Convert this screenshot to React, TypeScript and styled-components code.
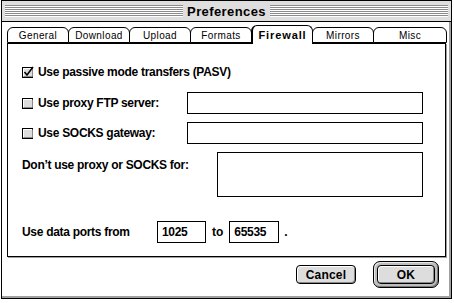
import React from 'react'
import styled, { createGlobalStyle } from 'styled-components'

const GlobalStyle = createGlobalStyle`
    html, body {
        margin: 0;
        padding: 0;
        background: #fff;
    }
    body {
        font-family: "Liberation Sans", Arial, sans-serif;
        color: #000;
    }
`

const Screen = styled.div`
    width: 454px;
    height: 303px;
    padding-left: 1px;
    box-sizing: border-box;
    background: #fff;
    overflow: hidden;
`

const Window = styled.div`
    width: 451px;
    height: 299px;
    box-sizing: border-box;
    border: 1px solid #000;
    background: #fff;
    display: flex;
    flex-direction: column;
    box-shadow: inset -2px -2px 0 #a0a0a0;
`

const TitleBar = styled.div`
    height: 20px;
    flex: none;
    display: flex;
    align-items: center;
    gap: 4px;
    padding: 0 3px;
    background: #dedede;
    border-bottom: 1px solid #000;
`

const Stripes = styled.div`
    flex: 1;
    height: 12px;
    background: repeating-linear-gradient(to bottom, #8c8c8c 0 1px, #fff 1px 2px);
`

const Title = styled.span`
    font-weight: bold;
    font-size: 13px;
    letter-spacing: 0.4px;
`

const Body = styled.div`
    flex: 1;
    display: flex;
    flex-direction: column;
    padding: 3px 0 0 5px;
`

const TabRow = styled.div`
    display: flex;
    align-items: flex-end;
    height: 18px;
    width: 440px;
    position: relative;
    z-index: 1;
`

const Tab = styled.div<{ $active?: boolean; $wide?: boolean }>`
    box-sizing: border-box;
    width: ${p => (p.$wide ? 'auto' : '62px')};
    flex: ${p => (p.$wide ? '1' : 'none')};
    height: ${p => (p.$active ? '19px' : '16px')};
    margin-bottom: ${p => (p.$active ? '-1px' : '0')};
    margin-left: -1px;
    border: 1px solid #000;
    border-bottom: ${p => (p.$active ? 'none' : '1px solid #000')};
    border-left-width: ${p => (p.$active ? '2px' : '1px')};
    border-radius: 6px 6px 0 0;
    background: #fff;
    display: flex;
    align-items: center;
    justify-content: center;
    font-size: ${p => (p.$active ? '11px' : '10px')};
    font-weight: ${p => (p.$active ? 'bold' : 'normal')};
    letter-spacing: ${p => (p.$active ? '0.9px' : '0.4px')};
    padding-bottom: ${p => (p.$active ? '1px' : '0')};
    &:first-child {
        margin-left: 0;
    }
`

const Panel = styled.div`
    box-sizing: border-box;
    width: 439px;
    height: 214px;
    border: 1px solid #000;
    box-shadow: 1px 1px 0 #a0a0a0;
    padding: 17px 22px 0 14px;
    display: flex;
    flex-direction: column;
`

const Row = styled.div<{ $top?: number; $start?: boolean }>`
    display: flex;
    align-items: ${p => (p.$start ? 'flex-start' : 'center')};
    justify-content: space-between;
    min-height: 22px;
    margin-top: ${p => p.$top ?? 0}px;
`

const Label = styled.label<{ $width?: number; $pad?: number }>`
    display: flex;
    align-items: center;
    gap: 4px;
    font-size: 12px;
    font-weight: bold;
    letter-spacing: -0.3px;
    white-space: nowrap;
    width: ${p => (p.$width ? `${p.$width}px` : 'auto')};
    padding-top: ${p => p.$pad ?? 0}px;
`

const Field = styled.div<{ $width: number; $height?: number }>`
    box-sizing: border-box;
    width: ${p => p.$width}px;
    height: ${p => p.$height ?? 22}px;
    border: 1px solid #000;
    background: #fff;
    padding: 0 4px;
    display: flex;
    align-items: center;
    font-size: 12px;
    font-weight: bold;
    letter-spacing: -0.3px;
`

const PortRow = styled.div`
    display: flex;
    align-items: center;
    height: 22px;
    margin-top: 24px;
`

const Joiner = styled.span<{ $left: number; $right: number }>`
    font-size: 12px;
    font-weight: bold;
    margin: 0 ${p => p.$right}px 0 ${p => p.$left}px;
`

const ButtonRow = styled.div`
    flex: 1;
    display: flex;
    justify-content: flex-end;
    align-items: flex-start;
    gap: 17px;
    padding: 4px 12px 0 0;
`

const Button = styled.div<{ $width: number }>`
    box-sizing: border-box;
    width: ${p => p.$width}px;
    height: 19px;
    margin-top: 4px;
    border: 1px solid #000;
    border-radius: 4px;
    background: #dddddd;
    box-shadow: inset 1px 1px 0 #fff, inset -1px -1px 0 #888;
    display: flex;
    align-items: center;
    justify-content: center;
    font-size: 12px;
    font-weight: bold;
    letter-spacing: 0.2px;
`

const DefaultRing = styled.div`
    box-sizing: border-box;
    height: 27px;
    padding: 3px;
    border: 1px solid #000;
    border-radius: 7px;
    background: #bdbdbd;
    box-shadow: inset 1px 1px 0 #e8e8e8, inset -1px -1px 0 #7a7a7a;
    & > div {
        margin-top: 0;
    }
`

const Check = ({ checked }: { checked?: boolean }) => (
    <svg width="12" height="12" viewBox="0 0 12 12">
        <rect x="0.5" y="1.5" width="10" height="10" fill="#dcdcdc" stroke="#000" />
        <path d="M1.5 10.5 H10.5 V2.5" fill="none" stroke="#8a8a8a" />
        <path d="M1.5 10 V2.5 H10" fill="none" stroke="#fff" />
        {checked && (
            <path d="M2.5 6 L5 9 L11 1" fill="none" stroke="#000" strokeWidth="1.6" />
        )}
    </svg>
)

const tabs = ['General', 'Download', 'Upload', 'Formats', 'Firewall', 'Mirrors', 'Misc']

const App = () => {
    return (
        <>
            <GlobalStyle />
            <Screen>
                <Window>
                    <TitleBar>
                        <Stripes />
                        <Title>Preferences</Title>
                        <Stripes />
                    </TitleBar>
                    <Body>
                        <TabRow>
                            {tabs.map((t) => (
                                <Tab key={t} $active={t === 'Firewall'} $wide={t === 'Misc'}>
                                    {t}
                                </Tab>
                            ))}
                        </TabRow>
                        <Panel>
                            <Row>
                                <Label>
                                    <Check checked />
                                    Use passive mode transfers (PASV)
                                </Label>
                            </Row>
                            <Row $top={9}>
                                <Label>
                                    <Check />
                                    Use proxy FTP server:
                                </Label>
                                <Field $width={236} />
                            </Row>
                            <Row $top={8}>
                                <Label>
                                    <Check />
                                    Use SOCKS gateway:
                                </Label>
                                <Field $width={236} />
                            </Row>
                            <Row $top={8} $start>
                                <Label $pad={6}>Don’t use proxy or SOCKS for:</Label>
                                <Field $width={206} $height={45} />
                            </Row>
                            <PortRow>
                                <Label $width={135}>Use data ports from</Label>
                                <Field $width={49}>1025</Field>
                                <Joiner $left={6} $right={6}>to</Joiner>
                                <Field $width={50}>65535</Field>
                                <Joiner $left={5} $right={0}>.</Joiner>
                            </PortRow>
                        </Panel>
                        <ButtonRow>
                            <Button $width={60}>Cancel</Button>
                            <DefaultRing>
                                <Button $width={58}>OK</Button>
                            </DefaultRing>
                        </ButtonRow>
                    </Body>
                </Window>
            </Screen>
        </>
    )
}

export default App
